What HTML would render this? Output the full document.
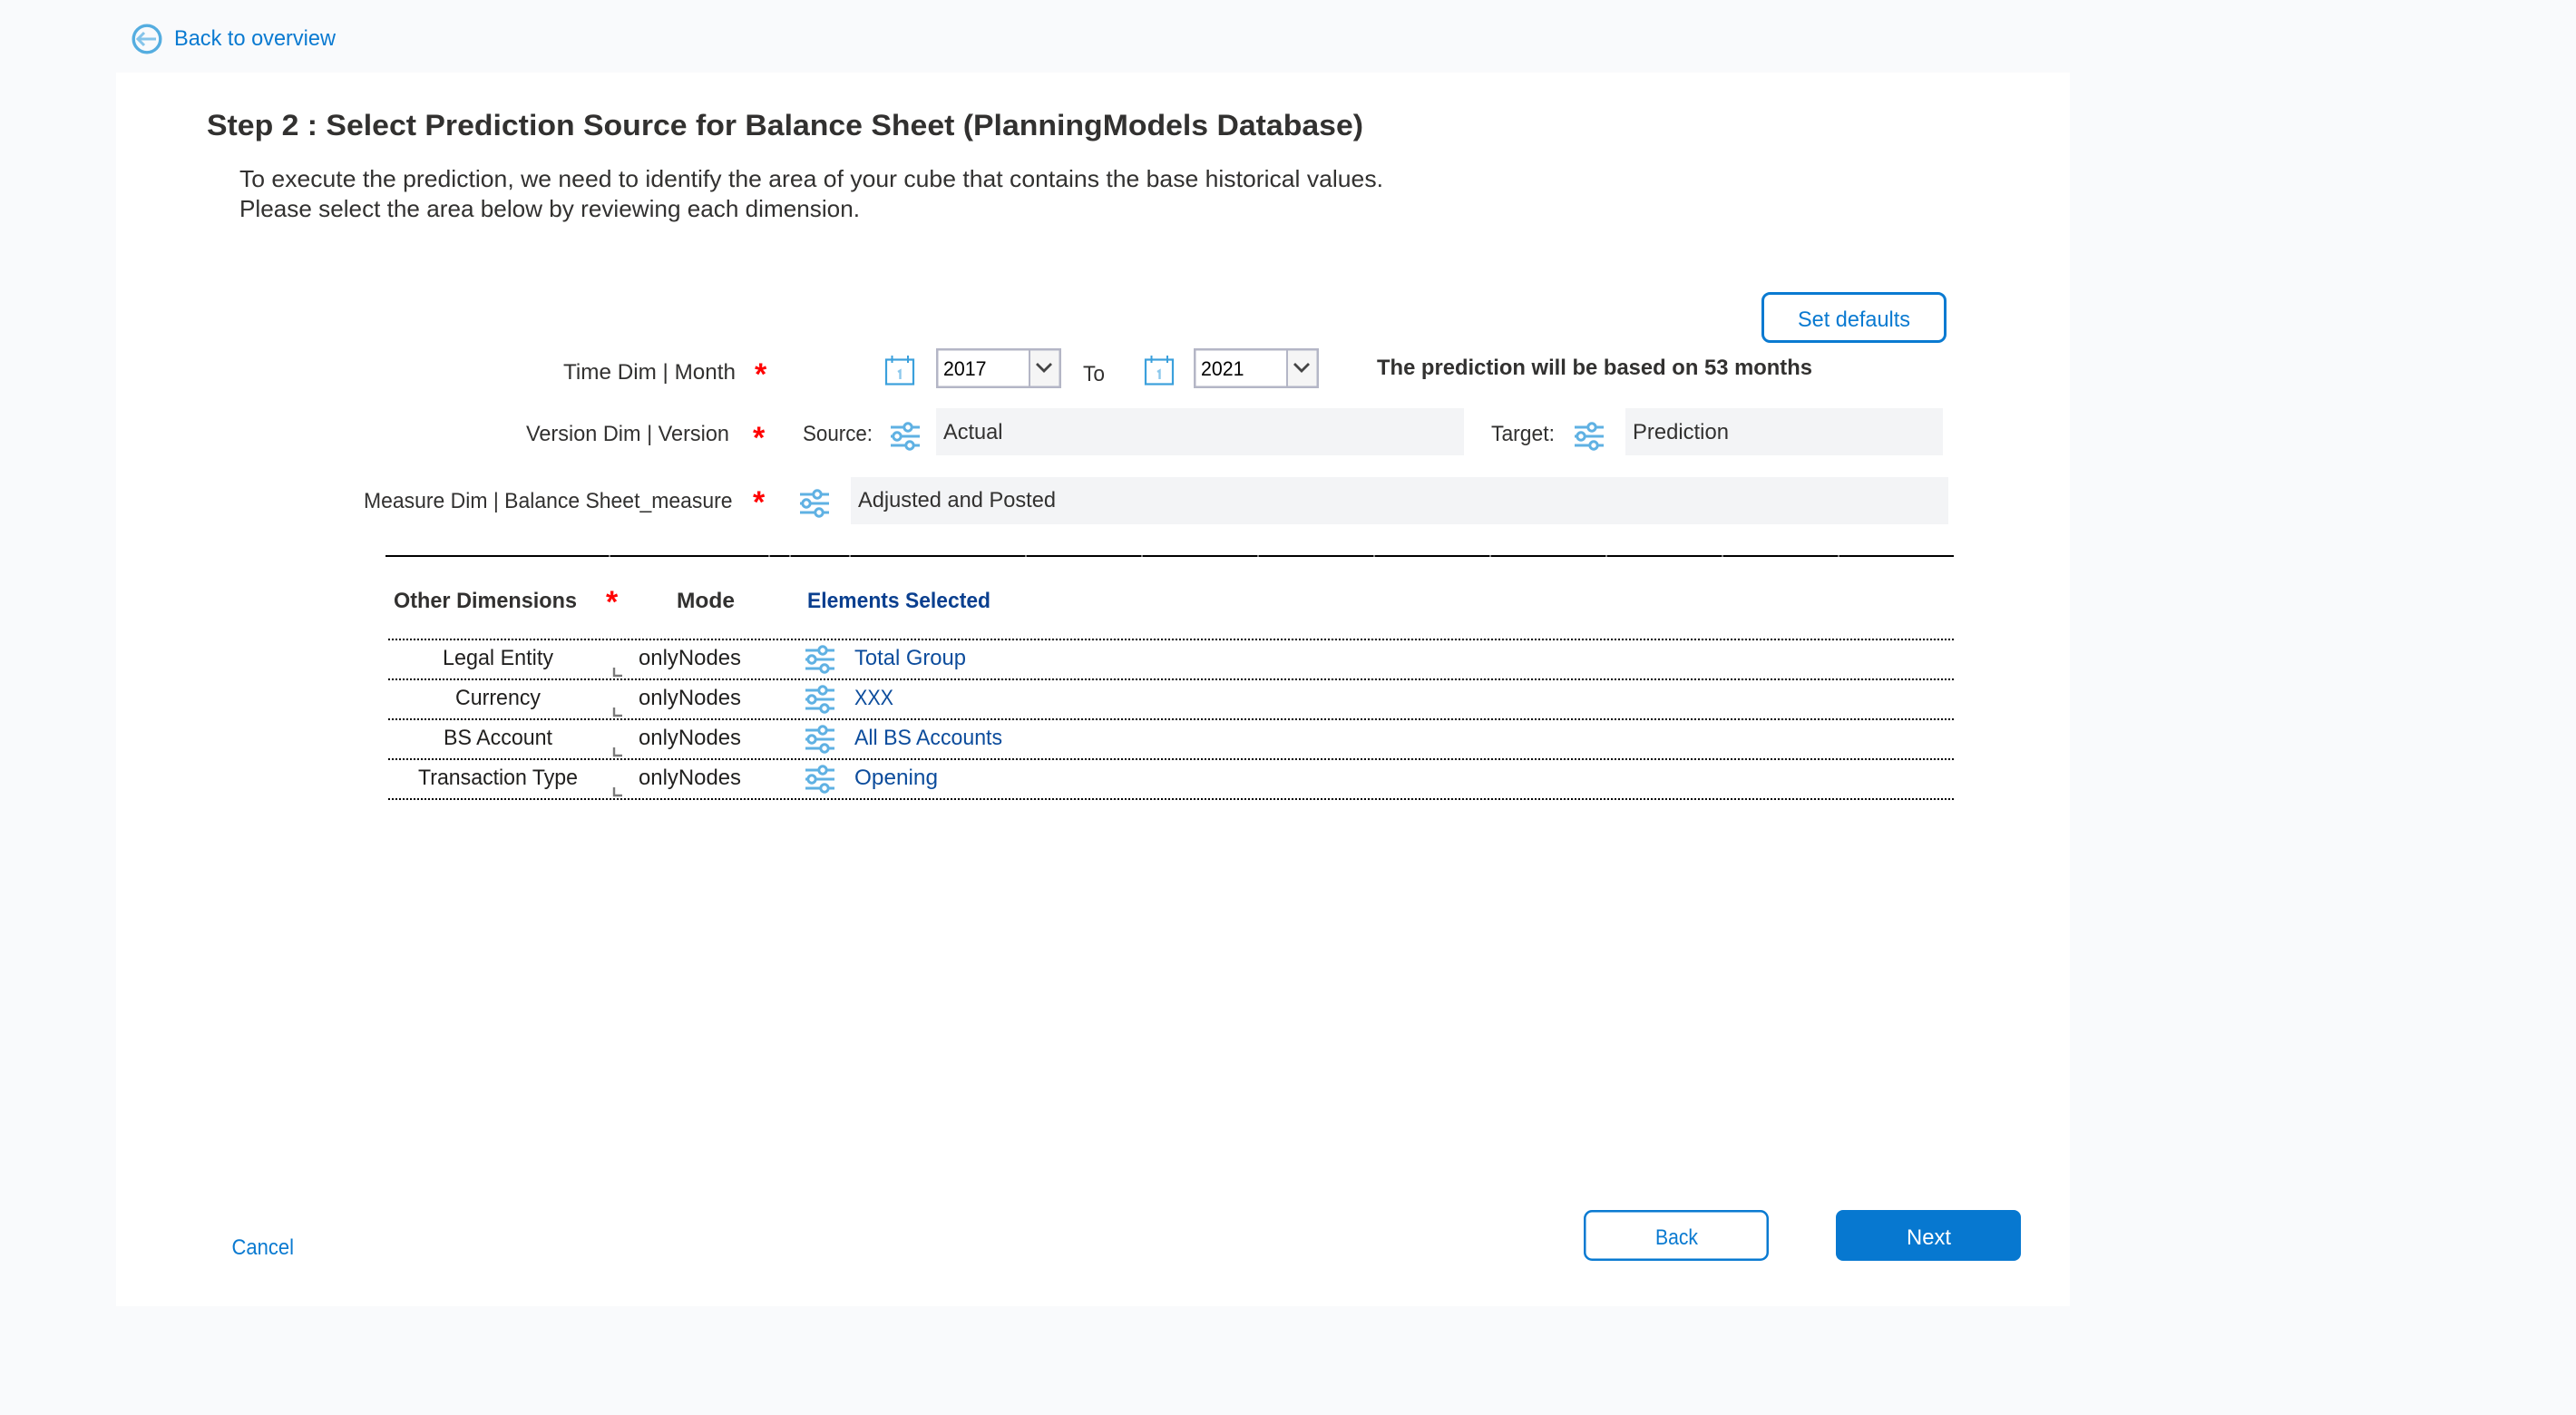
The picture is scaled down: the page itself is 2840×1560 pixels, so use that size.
<!DOCTYPE html>
<html lang="en"><head><meta charset="utf-8"><title>Step 2</title>
<style>
html,body{margin:0;padding:0;width:2840px;height:1560px;overflow:hidden;background:#f9fafc}
svg{display:block;position:absolute;left:0;top:0}
text{font-family:"Liberation Sans",Arial,sans-serif;font-size:24.5px;fill:#323130}
.b{font-weight:700}
.l{fill:#0a7ad1}
.d{fill:#0c4c9c}
.k{fill:#201f1e}
.s{font-weight:700;font-size:34px;fill:#ff0000}
.y{font-size:22px;fill:#000}
.ic line,.ic circle{stroke:#5fb1e3;stroke-width:3;fill:#fff}
.m{fill:none;stroke:#7a7a7a;stroke-width:2.4}
.dot{stroke:#000;stroke-width:2;stroke-dasharray:2 2}
</style></head><body>
<svg width="2840" height="1560" viewBox="0 0 2840 1560" xmlns="http://www.w3.org/2000/svg">
<defs>
<g id="sl" class="ic">
<line x1="0" y1="5" x2="32" y2="5"/><line x1="0" y1="15" x2="32" y2="15"/><line x1="0" y1="25" x2="32" y2="25"/>
<circle cx="19" cy="5" r="4.200"/><circle cx="7" cy="15" r="4.200"/><circle cx="21" cy="25" r="4.200"/>
</g>
<g id="cal">
<rect x="1" y="4.500" width="30" height="27" fill="#fff" stroke="#3ba0dc" stroke-width="2.200"/>
<path d="M7.500 0v8M25 0v8" stroke="#3ba0dc" stroke-width="2" fill="none"/>
<path d="M14 18l2.500-1.500V26" stroke="#8cc8ec" stroke-width="2.400" fill="none"/>
</g>
<g id="sel">
<rect x="1.250" y="1.250" width="135.500" height="41.500" fill="#fff" stroke="#b4b6c6" stroke-width="2.500"/>
<rect x="104" y="2.500" width="31.500" height="39" fill="#f5f5f5"/>
<line x1="103" y1="2" x2="103" y2="42" stroke="#b4b6c6" stroke-width="2"/>
<path d="M111 17l8 8 8-8" fill="none" stroke="#444" stroke-width="2.800"/>
</g>
<path id="mk" class="m" d="M677 736v9h9"/>
</defs>

<rect x="128" y="80" width="2154" height="1360" fill="#fff"/>

<circle cx="162" cy="43" r="14.800" fill="none" stroke="#55ade0" stroke-width="3.400"/>
<path d="M172 43h-20M159 36l-7 7 7 7" fill="none" stroke="#85c4ea" stroke-width="3"/>
<text x="192" y="50" class="l" textLength="178" lengthAdjust="spacingAndGlyphs">Back to overview</text>

<text x="228" y="149" class="b" style="font-size:32px" textLength="1275" lengthAdjust="spacingAndGlyphs">Step 2 : Select Prediction Source for Balance Sheet (PlanningModels Database)</text>
<text x="264" y="206" style="font-size:26px" textLength="1261" lengthAdjust="spacingAndGlyphs">To execute the prediction, we need to identify the area of your cube that contains the base historical values.</text>
<text x="264" y="239" style="font-size:26px" textLength="684" lengthAdjust="spacingAndGlyphs">Please select the area below by reviewing each dimension.</text>

<rect x="1943.500" y="323.500" width="201" height="53" rx="8" fill="#fff" stroke="#0a7ad1" stroke-width="3"/>
<text x="1982" y="360" class="l" textLength="124" lengthAdjust="spacingAndGlyphs">Set defaults</text>

<text x="621" y="418" textLength="190" lengthAdjust="spacingAndGlyphs">Time Dim | Month</text>
<text x="832" y="424" class="s">*</text>
<use href="#cal" x="976" y="392"/>
<use href="#sel" x="1032" y="384"/>
<text x="1040" y="414" class="y" textLength="47.500" lengthAdjust="spacingAndGlyphs">2017</text>
<text x="1194" y="420" textLength="24" lengthAdjust="spacingAndGlyphs">To</text>
<use href="#cal" x="1262" y="392"/>
<use href="#sel" x="1316" y="384"/>
<text x="1324" y="414" class="y" textLength="47.500" lengthAdjust="spacingAndGlyphs">2021</text>
<text x="1518" y="413" class="b" textLength="480" lengthAdjust="spacingAndGlyphs">The prediction will be based on 53 months</text>

<text x="580" y="486" textLength="224" lengthAdjust="spacingAndGlyphs">Version Dim | Version</text>
<text x="830" y="494" class="s">*</text>
<text x="885" y="486" textLength="77" lengthAdjust="spacingAndGlyphs">Source:</text>
<use href="#sl" x="982" y="466"/>
<rect x="1032" y="450" width="582" height="52" fill="#f3f4f6"/>
<text x="1040" y="484" textLength="65.500" lengthAdjust="spacingAndGlyphs">Actual</text>
<text x="1644" y="486" textLength="70" lengthAdjust="spacingAndGlyphs">Target:</text>
<use href="#sl" x="1736" y="466"/>
<rect x="1792" y="450" width="350" height="52" fill="#f3f4f6"/>
<text x="1800" y="484" textLength="106" lengthAdjust="spacingAndGlyphs">Prediction</text>

<text x="401" y="560" textLength="406.500" lengthAdjust="spacingAndGlyphs">Measure Dim | Balance Sheet_measure</text>
<text x="830" y="565" class="s">*</text>
<use href="#sl" x="882" y="540"/>
<rect x="938" y="526" width="1210" height="52" fill="#f3f4f6"/>
<text x="946" y="559" textLength="218" lengthAdjust="spacingAndGlyphs">Adjusted and Posted</text>

<rect x="425" y="612" width="1729" height="2" fill="#000"/>
<path d="M672 612v3M848 612v3M871 612v3M937 612v3M1131 612v3M1259 612v3M1387 612v3M1515 612v3M1643 612v3M1771 612v3M1899 612v3M2027 612v3" stroke="#fff" stroke-width="1"/>

<text x="434" y="670" class="b" textLength="202" lengthAdjust="spacingAndGlyphs">Other Dimensions</text>
<text x="668" y="675" class="s">*</text>
<text x="746" y="670" class="b" textLength="64" lengthAdjust="spacingAndGlyphs">Mode</text>
<text x="890" y="670" class="b" style="fill:#0a3f8f" textLength="202" lengthAdjust="spacingAndGlyphs">Elements Selected</text>

<line class="dot" x1="2154" y1="705" x2="426" y2="705"/>
<line class="dot" x1="2154" y1="749" x2="426" y2="749"/>
<line class="dot" x1="2154" y1="793" x2="426" y2="793"/>
<line class="dot" x1="2154" y1="837" x2="426" y2="837"/>
<line class="dot" x1="2154" y1="881" x2="426" y2="881"/>

<text x="488" y="733" class="k" textLength="122" lengthAdjust="spacingAndGlyphs">Legal Entity</text>
<text x="704" y="733" class="k" textLength="113" lengthAdjust="spacingAndGlyphs">onlyNodes</text>
<use href="#sl" x="888" y="712"/>
<text x="942" y="733" class="d" textLength="123" lengthAdjust="spacingAndGlyphs">Total Group</text>
<use href="#mk"/>

<text x="502" y="777" class="k" textLength="94" lengthAdjust="spacingAndGlyphs">Currency</text>
<text x="704" y="777" class="k" textLength="113" lengthAdjust="spacingAndGlyphs">onlyNodes</text>
<use href="#sl" x="888" y="756"/>
<text x="942" y="777" class="d" textLength="43" lengthAdjust="spacingAndGlyphs">XXX</text>
<use href="#mk" y="44"/>

<text x="489" y="821" class="k" textLength="120" lengthAdjust="spacingAndGlyphs">BS Account</text>
<text x="704" y="821" class="k" textLength="113" lengthAdjust="spacingAndGlyphs">onlyNodes</text>
<use href="#sl" x="888" y="800"/>
<text x="942" y="821" class="d" textLength="163" lengthAdjust="spacingAndGlyphs">All BS Accounts</text>
<use href="#mk" y="88"/>

<text x="461" y="865" class="k" textLength="176" lengthAdjust="spacingAndGlyphs">Transaction Type</text>
<text x="704" y="865" class="k" textLength="113" lengthAdjust="spacingAndGlyphs">onlyNodes</text>
<use href="#sl" x="888" y="844"/>
<text x="942" y="865" class="d" textLength="92" lengthAdjust="spacingAndGlyphs">Opening</text>
<use href="#mk" y="132"/>

<text x="255.500" y="1383" class="l" textLength="68.500" lengthAdjust="spacingAndGlyphs">Cancel</text>
<rect x="1747.250" y="1335.250" width="201.500" height="53.500" rx="8" fill="#fff" stroke="#0a7ad1" stroke-width="2.500"/>
<text x="1825" y="1372" class="l" textLength="47" lengthAdjust="spacingAndGlyphs">Back</text>
<rect x="2024" y="1334" width="204" height="56" rx="8" fill="#0778d0"/>
<text x="2102" y="1372" style="fill:#fff" textLength="49" lengthAdjust="spacingAndGlyphs">Next</text>
</svg>
</body></html>
